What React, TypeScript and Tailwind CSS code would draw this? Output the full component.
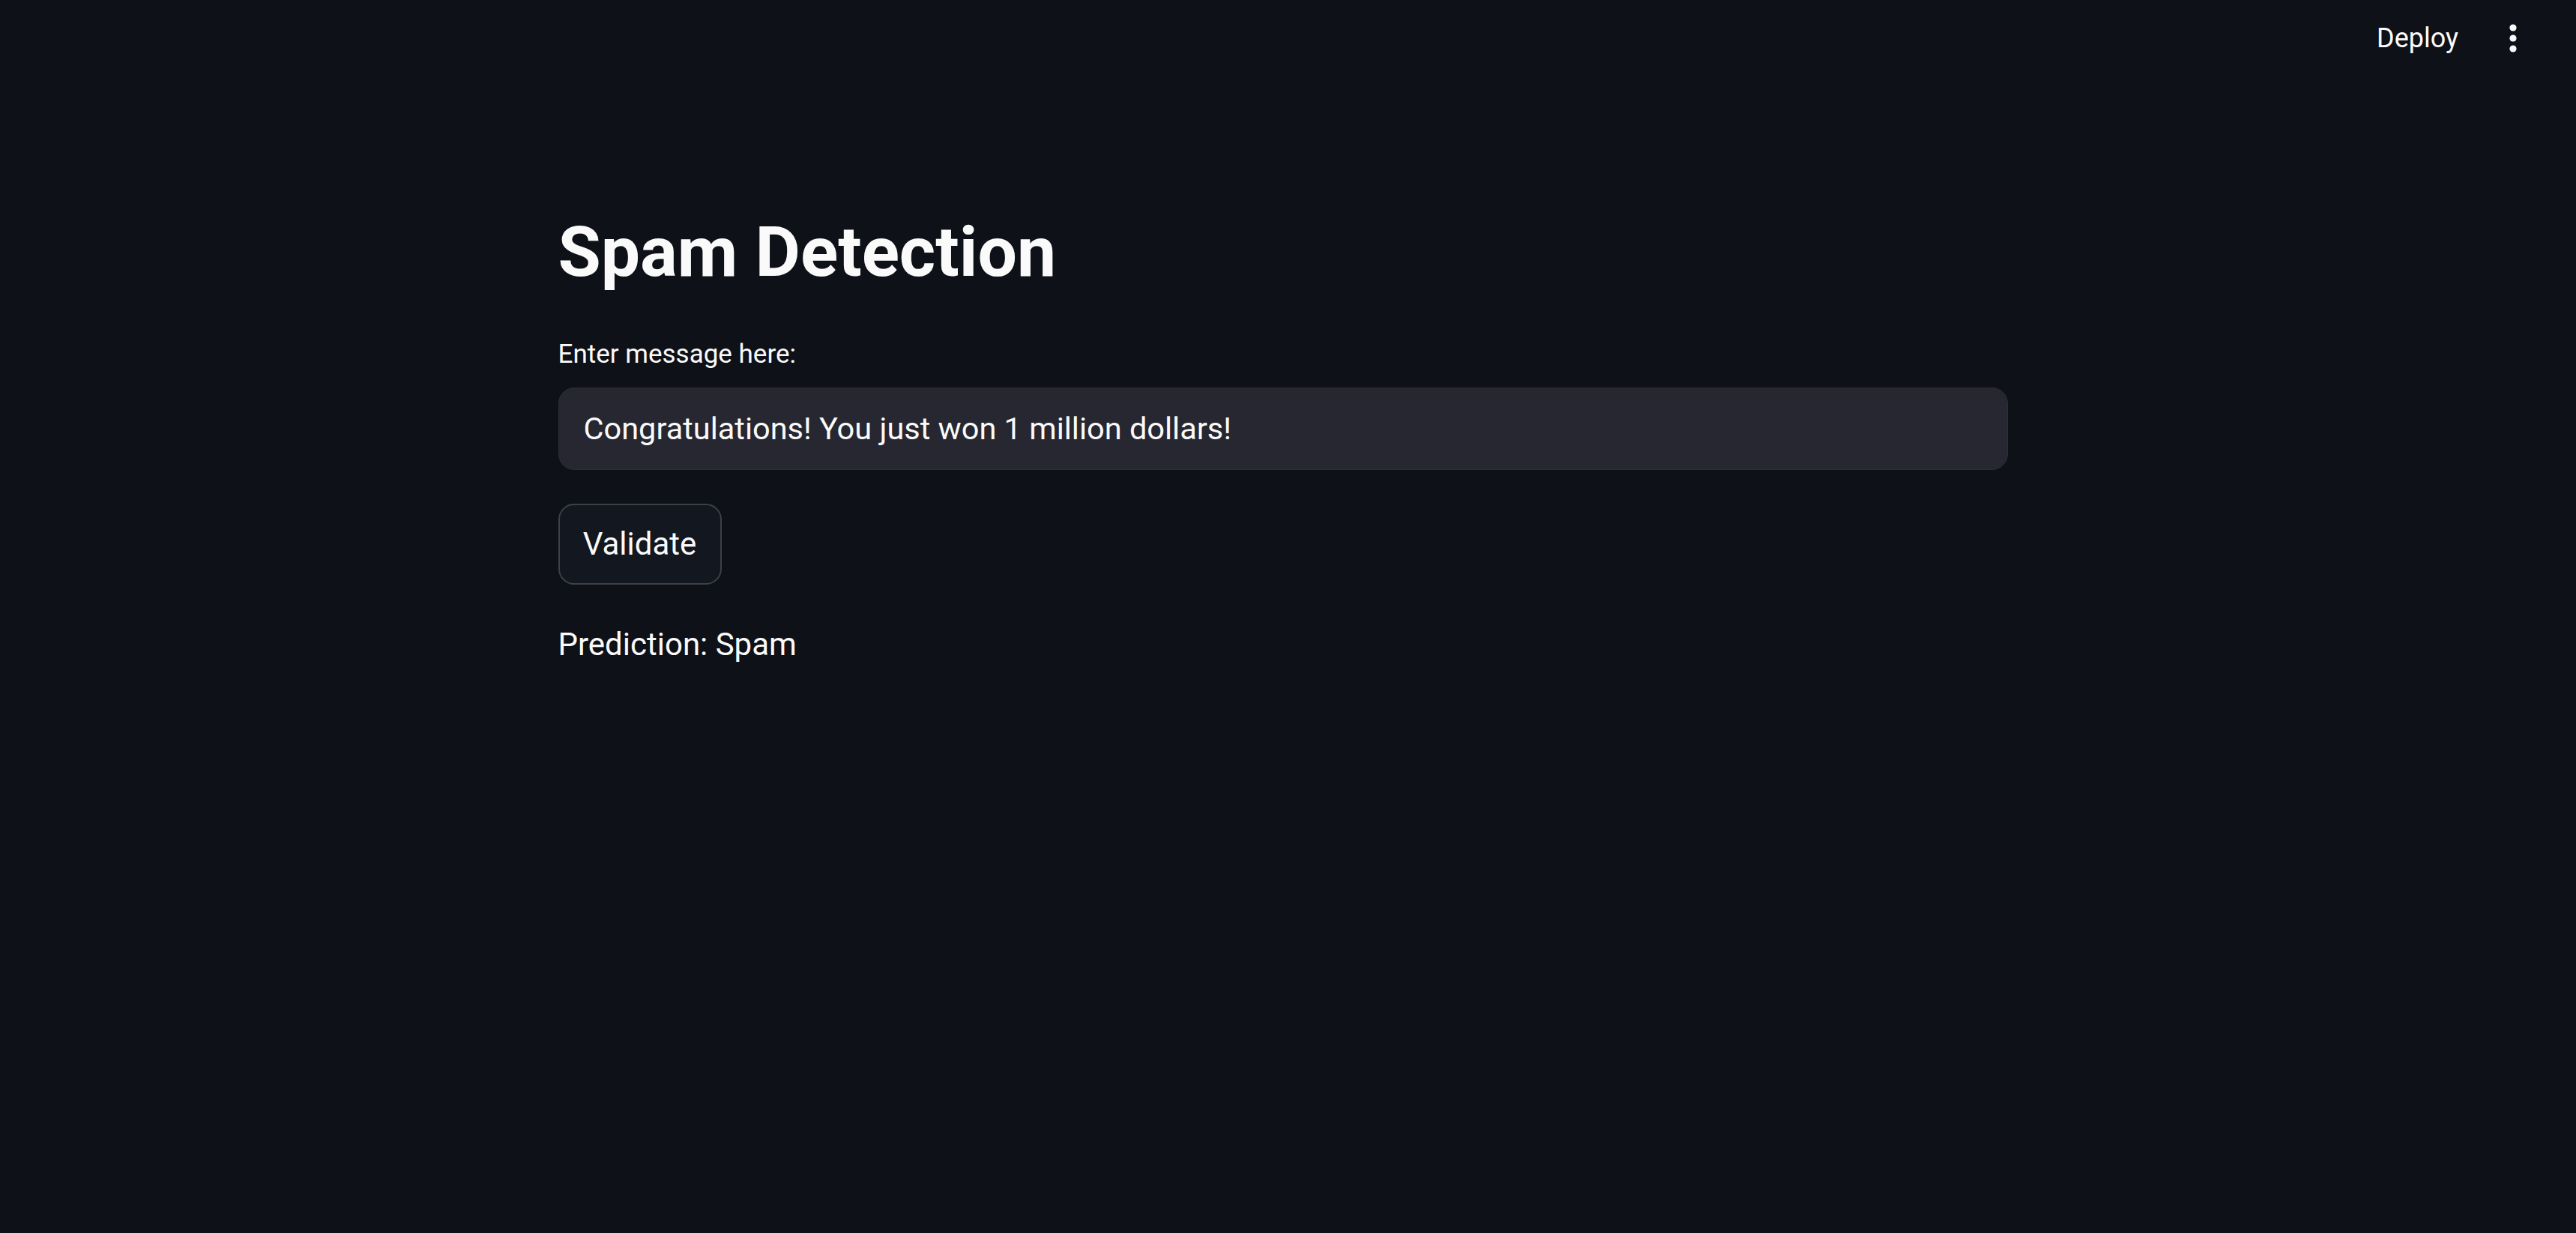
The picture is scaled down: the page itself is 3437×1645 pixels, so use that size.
import React from 'react';

function KebabIcon() {
  return (
    <svg width="12" height="40" viewBox="0 0 12 40" fill="#fafafa">
      <circle cx="6" cy="6" r="4.6" />
      <circle cx="6" cy="20" r="4.6" />
      <circle cx="6" cy="34" r="4.6" />
    </svg>
  );
}

export default function App() {
  return (
    <div className="h-screen overflow-hidden bg-[#0e1117] text-[#fafafa] font-['Roboto','Liberation_Sans',sans-serif]">
      {/* Header */}
      <header className="h-[102px] flex items-center justify-end gap-[45px] pr-[56px]">
        <button className="text-[36px] leading-none text-[#fafafa]">Deploy</button>
        <button className="w-[56px] h-[56px] flex items-center justify-center">
          <KebabIcon />
        </button>
      </header>

      {/* Main block */}
      <main className="mx-auto w-[1948px] pr-[14px] pt-[179px]">
        <h1 className="text-[93px] leading-[1.2] font-bold">Spam Detection</h1>

        <label className="block mt-[55px] text-[35px] leading-[1.4]">Enter message here:</label>
        <div className="mt-[20px] h-[110px] rounded-[21px] bg-[#262730] border border-[#2c2d36] flex items-center">
          <input
            readOnly
            defaultValue="Congratulations! You just won 1 million dollars!"
            className="w-full h-full bg-transparent pl-[33px] text-[41.5px] text-[#fafafa] outline-none"
          />
        </div>

        <button className="mt-[45px] w-[218px] h-[108px] rounded-[21px] bg-[#131720] border-2 border-[#3d4046] text-[42px] text-[#fafafa] flex items-center justify-center">
          Validate
        </button>

        <p className="mt-[48px] text-[42px] leading-[1.5]">Prediction: Spam</p>
      </main>
    </div>
  );
}
